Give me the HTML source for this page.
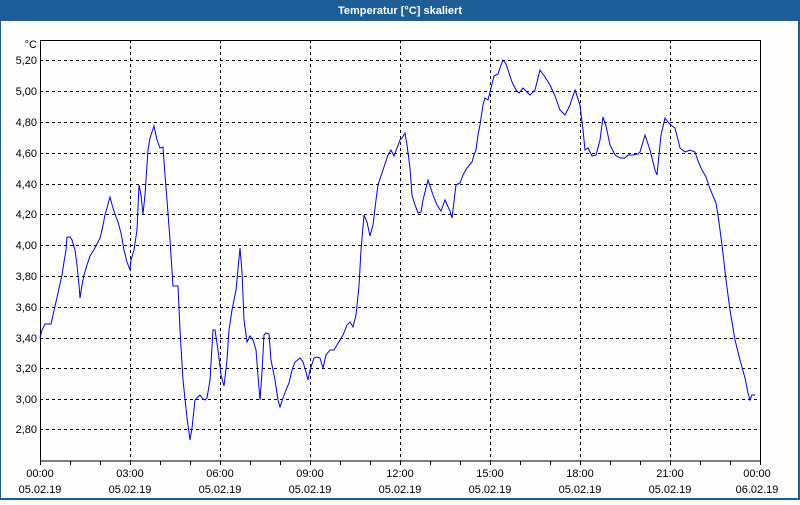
<!DOCTYPE html>
<html><head><style>
body{margin:0;width:800px;height:500px;overflow:hidden;background:#fff;font-family:"Liberation Sans",Tahoma,sans-serif}
</style></head><body>
<svg width="800" height="500" xmlns="http://www.w3.org/2000/svg" font-family="Liberation Sans, sans-serif" font-size="11">
<rect x="0" y="0" width="800" height="500" fill="#1e5e96"/>
<rect x="1" y="21" width="797" height="477" fill="#fdfdfd"/>
<text x="400" y="14" fill="#fff" font-weight="bold" font-size="11" text-anchor="middle">Temperatur [°C] skaliert</text>
<g stroke="#000" stroke-dasharray="3,3" stroke-width="1">
<line x1="40" y1="60.5" x2="760" y2="60.5"/><line x1="40" y1="91.5" x2="760" y2="91.5"/>
<line x1="40" y1="122.5" x2="760" y2="122.5"/><line x1="40" y1="153.5" x2="760" y2="153.5"/>
<line x1="40" y1="184.5" x2="760" y2="184.5"/><line x1="40" y1="214.5" x2="760" y2="214.5"/>
<line x1="40" y1="245.5" x2="760" y2="245.5"/><line x1="40" y1="276.5" x2="760" y2="276.5"/>
<line x1="40" y1="307.5" x2="760" y2="307.5"/><line x1="40" y1="338.5" x2="760" y2="338.5"/>
<line x1="40" y1="368.5" x2="760" y2="368.5"/><line x1="40" y1="399.5" x2="760" y2="399.5"/>
<line x1="40" y1="429.5" x2="760" y2="429.5"/>
<line x1="130.5" y1="40" x2="130.5" y2="461"/><line x1="220.5" y1="40" x2="220.5" y2="461"/>
<line x1="310.5" y1="40" x2="310.5" y2="461"/><line x1="400.5" y1="40" x2="400.5" y2="461"/>
<line x1="490.5" y1="40" x2="490.5" y2="461"/><line x1="580.5" y1="40" x2="580.5" y2="461"/>
<line x1="670.5" y1="40" x2="670.5" y2="461"/>
</g>
<rect x="40.5" y="40.5" width="720" height="420.5" fill="none" stroke="#000" stroke-width="1"/>
<g stroke="#000">
<line x1="70.5" y1="461" x2="70.5" y2="465"/><line x1="100.5" y1="461" x2="100.5" y2="465"/><line x1="130.5" y1="461" x2="130.5" y2="465"/>
<line x1="160.5" y1="461" x2="160.5" y2="465"/><line x1="190.5" y1="461" x2="190.5" y2="465"/><line x1="220.5" y1="461" x2="220.5" y2="465"/>
<line x1="250.5" y1="461" x2="250.5" y2="465"/><line x1="280.5" y1="461" x2="280.5" y2="465"/><line x1="310.5" y1="461" x2="310.5" y2="465"/>
<line x1="340.5" y1="461" x2="340.5" y2="465"/><line x1="370.5" y1="461" x2="370.5" y2="465"/><line x1="400.5" y1="461" x2="400.5" y2="465"/>
<line x1="430.5" y1="461" x2="430.5" y2="465"/><line x1="460.5" y1="461" x2="460.5" y2="465"/><line x1="490.5" y1="461" x2="490.5" y2="465"/>
<line x1="520.5" y1="461" x2="520.5" y2="465"/><line x1="550.5" y1="461" x2="550.5" y2="465"/><line x1="580.5" y1="461" x2="580.5" y2="465"/>
<line x1="610.5" y1="461" x2="610.5" y2="465"/><line x1="640.5" y1="461" x2="640.5" y2="465"/><line x1="670.5" y1="461" x2="670.5" y2="465"/>
<line x1="700.5" y1="461" x2="700.5" y2="465"/><line x1="730.5" y1="461" x2="730.5" y2="465"/><line x1="760.5" y1="461" x2="760.5" y2="465"/>
<line x1="40.5" y1="461" x2="40.5" y2="465"/>
</g>
<g fill="#000" text-anchor="end">
<text x="37" y="48">°C</text>
<text x="37" y="64">5,20</text><text x="37" y="95">5,00</text><text x="37" y="126">4,80</text>
<text x="37" y="157">4,60</text><text x="37" y="188">4,40</text><text x="37" y="218">4,20</text>
<text x="37" y="249">4,00</text><text x="37" y="280">3,80</text><text x="37" y="311">3,60</text>
<text x="37" y="342">3,40</text><text x="37" y="372">3,20</text><text x="37" y="403">3,00</text>
<text x="37" y="433">2,80</text>
</g>
<g fill="#000" text-anchor="middle">
<text x="40" y="477">00:00</text><text x="40" y="493">05.02.19</text>
<text x="130" y="477">03:00</text><text x="130" y="493">05.02.19</text>
<text x="220" y="477">06:00</text><text x="220" y="493">05.02.19</text>
<text x="310" y="477">09:00</text><text x="310" y="493">05.02.19</text>
<text x="400" y="477">12:00</text><text x="400" y="493">05.02.19</text>
<text x="490" y="477">15:00</text><text x="490" y="493">05.02.19</text>
<text x="580" y="477">18:00</text><text x="580" y="493">05.02.19</text>
<text x="670" y="477">21:00</text><text x="670" y="493">05.02.19</text>
<text x="757" y="477">00:00</text><text x="757" y="493">06.02.19</text>
</g>
<polyline fill="none" stroke="#0000ee" stroke-width="1" points="40,338 42,330 45,324 51,324 53,315 58,293 62,275 64,262 66,250 67,237 70,237 72,240 75,250 77,265 79,285 80,298 82,285 84,275 87,265 90,256 95,248 98,242 100,238 102,230 105,215 107,208 110,197 113,208 116,217 118,222 121,233 124,250 127,262 130,270 131,260 134,250 137,230 139,185 141,195 143,214 145,195 148,150 150,138 154,126 157,140 160,148 163,147 165,175 167,200 170,240 173,286 178,286 180,330 183,380 187,418 190,440 192,428 195,400 198,397 200,395 203,399 205,400 207,398 210,380 213,330 215,330 218,350 221,375 224,386 227,360 229,330 232,310 236,290 240,248 242,272 244,320 247,342 250,336 253,340 256,350 258,376 260,400 262,372 264,335 266,333 269,334 271,360 275,380 278,400 280,407 283,398 286,390 289,383 292,370 295,362 300,358 303,362 306,372 308,380 310,370 314,358 317,357 320,358 323,368 326,355 330,350 334,350 337,345 340,340 343,335 347,325 350,322 353,327 356,315 359,286 361,250 364,215 367,222 370,236 373,225 376,200 378,185 383,170 388,155 391,150 394,156 397,148 400,140 402,138 405,133 407,145 410,168 412,195 414,202 418,213 421,212 423,200 428,180 433,195 437,205 441,211 445,200 450,211 452,218 456,185 460,183 463,175 467,168 472,162 474,155 476,150 478,135 480,125 483,105 485,98 488,100 491,88 494,76 498,74 500,68 503,60 506,64 508,70 512,82 516,90 519,93 523,88 530,95 535,90 540,70 545,77 550,85 555,96 560,110 565,115 570,105 575,90 580,105 583,130 585,150 588,148 590,152 592,156 596,155 600,140 603,117 606,126 610,145 615,155 620,158 625,158 628,155 632,155 638,154 640,152 645,135 650,150 655,170 657,175 661,135 665,118 668,122 672,126 675,128 680,148 685,152 690,150 695,152 698,161 702,170 706,177 709,186 713,196 716,203 718,215 722,245 726,280 730,310 735,340 740,360 745,378 748,393 750,400 752,395 755,395"/>
</svg>
</body></html>
